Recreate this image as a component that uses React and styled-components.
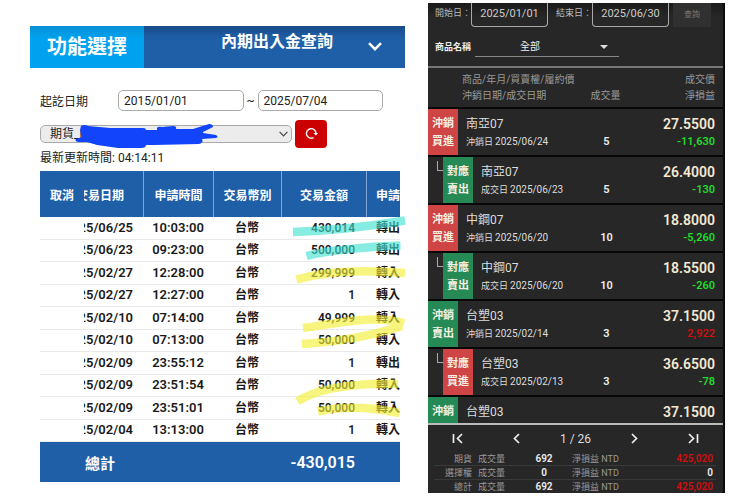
import React from "react";
import styled, { createGlobalStyle } from "styled-components";

const GlobalStyle = createGlobalStyle`
  * { box-sizing: border-box; }
  body {
    margin: 0;
    background: #fff;
    font-family: Roboto, "Noto Sans CJK TC", sans-serif;
  }
  button, input, select { font-family: inherit; margin: 0; }
  h1, h2, p { margin: 0; }
`;

const BLUE = "#1f5fa8";

const Page = styled.main`
  display: grid;
  grid-template-columns: 375fr 297fr;
  column-gap: 23px;
  align-items: start;
  padding: 0 15px 0 30px;
`;

/* ---------- Cash transfer panel ---------- */

const TransferPanel = styled.section`
  margin-top: 26px;
  color: #222;
  min-width: 0;
`;

const TopBar = styled.header`
  display: flex;
  height: 42px;
  color: #fff;
  background: linear-gradient(#1a4a88, ${BLUE} 12px);
`;

const MenuButton = styled.button`
  width: 114px;
  border: 0;
  padding: 0 0 4px;
  color: #fff;
  font-size: 20px;
  font-weight: 700;
  background: linear-gradient(#0a8fd4, #00a2ef 12px);
`;

const BarTitle = styled.h1`
  flex: 1;
  padding-left: 66px;
  text-align: center;
  font-size: 16px;
  line-height: 31px;
  font-weight: 700;
  white-space: nowrap;
`;

const BarToggle = styled.button`
  width: 61px;
  border: 0;
  padding: 0 0 2px;
  background: none;
  color: #fff;
  svg { display: block; margin: 0 auto; }
`;

const PanelBody = styled.div`
  padding: 22px 5px 0 10px;
`;

const DateRow = styled.div`
  display: flex;
  align-items: center;
  font-size: 12px;
`;

const DateLabel = styled.label`
  flex: none;
  width: 78px;
`;

const DateInput = styled.input`
  flex: 1;
  width: 0;
  min-width: 0;
  height: 21px;
  padding: 0 5px;
  border: 1px solid #aaa;
  border-radius: 5px;
  background: #fff;
  color: #222;
  font-size: 12px;
`;

const Tilde = styled.span`
  width: 14px;
  text-align: center;
`;

const RangeFields = styled.div`
  flex: 1;
  min-width: 0;
  display: flex;
  align-items: center;
  margin-right: 17px;
`;

const AccountRow = styled.div`
  display: flex;
  align-items: center;
  gap: 3px;
  margin-top: 9px;
  margin-right: 73px;
`;

const AccountField = styled.div`
  position: relative;
  flex: 1;
  height: 18px;
`;

const AccountSelect = styled.select`
  appearance: none;
  display: block;
  width: 100%;
  height: 18px;
  padding: 0 9px;
  border: 1px solid #aaa;
  border-radius: 5px;
  background: #ececec;
  color: #222;
  font-size: 12px;
`;

const SelectArrow = styled.svg`
  position: absolute;
  right: 4px;
  top: 6px;
  pointer-events: none;
`;

const Scribble = styled.svg`
  position: absolute;
  left: 35px;
  top: -3px;
  pointer-events: none;
`;

const RefreshButton = styled.button`
  display: flex;
  align-items: center;
  justify-content: center;
  width: 32px;
  height: 28px;
  padding: 0 0 2px;
  border: 0;
  border-radius: 4px;
  background: #cb0000;
  color: #fff;
`;

const Updated = styled.p`
  height: 23px;
  font-size: 12px;
  line-height: 20px;
`;

const TableWrap = styled.div`
  position: relative;
`;

const TransferTable = styled.table`
  width: 100%;
  height: 311px;
  table-layout: fixed;
  border-collapse: separate;
  border-spacing: 0;
  font-size: 12px;
  font-weight: 700;
`;

const HeadRow = styled.tr`
  height: 46px;
  background: ${BLUE};
  color: #fff;
`;

const Th = styled.th`
  padding: 0;
  overflow: hidden;
  white-space: nowrap;
  font-weight: 700;
  text-align: ${(p) => p.$align || "center"};
  border-left: ${(p) => (p.$rule ? "1px solid #7fa6d3" : "0")};
  padding-left: ${(p) => p.$left || 0}px;
`;

const Td = styled.td`
  padding: 0;
  overflow: hidden;
  white-space: nowrap;
  line-height: 16px;
  text-align: ${(p) => p.$align || "center"};
  padding-right: ${(p) => p.$right || 0}px;
  padding-left: ${(p) => p.$left || 0}px;
  font-weight: ${(p) => (p.$cjk ? 700 : 600)};
  font-size: ${(p) => (p.$wide ? 13 : 12)}px;
  border-bottom: 1px solid #eaeaea;
  color: #1a1a1a;
`;

const Clip = styled.div`
  display: flex;
  justify-content: flex-end;
  overflow: hidden;
  padding-right: ${(p) => p.$right}px;
`;

const TotalRow = styled.tr`
  height: 40px;
  background: ${BLUE};
  color: #fff;
  font-size: 16px;
`;

const TotalCell = styled.td`
  padding: 0 ${(p) => p.$right || 0}px 0 ${(p) => p.$left || 0}px;
  text-align: ${(p) => p.$align || "left"};
  font-size: ${(p) => (p.$align ? 16 : 15)}px;
  font-weight: ${(p) => (p.$align ? 600 : 700)};
`;

const Highlights = styled.svg`
  position: absolute;
  right: -6px;
  top: 39px;
  pointer-events: none;
  opacity: 0.62;
`;

const transfers = [
  ["2025/06/25", "10:03:00", "430,014", "轉出"],
  ["2025/06/23", "09:23:00", "500,000", "轉出"],
  ["2025/02/27", "12:28:00", "299,999", "轉入"],
  ["2025/02/27", "12:27:00", "1", "轉入"],
  ["2025/02/10", "07:14:00", "49,999", "轉入"],
  ["2025/02/10", "07:13:00", "50,000", "轉入"],
  ["2025/02/09", "23:55:12", "1", "轉出"],
  ["2025/02/09", "23:51:54", "50,000", "轉入"],
  ["2025/02/09", "23:51:01", "50,000", "轉入"],
  ["2025/02/04", "13:13:00", "1", "轉入"],
];

const Col = styled.col`
  width: ${(p) => p.$w}px;
`;

function Transfers() {
  return (
    <TransferPanel>
      <TopBar>
        <MenuButton type="button">功能選擇</MenuButton>
        <BarTitle>內期出入金查詢</BarTitle>
        <BarToggle type="button" aria-label="展開">
          <svg width="14" height="9" viewBox="0 0 14 9" fill="none" stroke="currentColor" strokeWidth="2.4">
            <path d="M1 1.2 7 7.2 13 1.2" />
          </svg>
        </BarToggle>
      </TopBar>
      <PanelBody>
        <DateRow>
          <DateLabel htmlFor="from">起訖日期</DateLabel>
          <RangeFields>
            <DateInput id="from" defaultValue="2015/01/01" />
            <Tilde>~</Tilde>
            <DateInput aria-label="結束日期" defaultValue="2025/07/04" />
          </RangeFields>
        </DateRow>
        <AccountRow>
          <AccountField>
            <AccountSelect aria-label="帳號">
              <option>期貨_F</option>
            </AccountSelect>
            <SelectArrow width="9" height="6" viewBox="0 0 9 6" fill="none" stroke="#444" strokeWidth="1.2">
              <path d="M.6.8 4.5 4.8 8.4.8" />
            </SelectArrow>
            <Scribble width="144" height="27" viewBox="75 122 144 27" fill="#1245fb">
              <path d="M81 126Q84 124 88 126L110 128 143 128Q146 128 146 130L157 130 157 128Q158 126 162 127L173 126Q177 126 176 129L193 129 209 124Q213 124 213 127L203 132 203 133 216 135Q219 137 216 138L202 139Q204 143 199 144L154 145 146 145Q146 148 141 148H118L97 145 87 142 78 142Q74 141 76 139L82 137Q79 131 81 126Z" />
            </Scribble>
          </AccountField>
          <RefreshButton type="button" aria-label="重新整理">
            <svg width="13" height="13" viewBox="0 0 13 13" fill="none" stroke="currentColor" strokeWidth="1.4">
              <path d="M8.6 10.6A4.8 4.8 0 1 1 11 6.4" />
              <path d="M8.6 6h4.4L10.9 8.6Z" fill="currentColor" stroke="none" />
            </svg>
          </RefreshButton>
        </AccountRow>
        <Updated>最新更新時間: 04:14:11</Updated>
        <TableWrap>
          <TransferTable>
            <colgroup>
              <Col $w={44} />
              <Col $w={59} />
              <Col $w={70} />
              <Col $w={68} />
              <Col $w={85} />
              <Col $w={34} />
            </colgroup>
            <thead>
              <HeadRow>
                <Th>取消</Th>
                <Th>
                  <Clip $right={19}>
                    <span>交易日期</span>
                  </Clip>
                </Th>
                <Th $rule>申請時間</Th>
                <Th $rule>交易幣別</Th>
                <Th $rule>交易金額</Th>
                <Th $rule $align="left" $left={9}>申請</Th>
              </HeadRow>
            </thead>
            <tbody>
              {transfers.map(([date, time, amount, kind]) => (
                <tr key={date + time}>
                  <Td />
                  <Td $wide>
                    <Clip $right={10}>
                      <span>{date}</span>
                    </Clip>
                  </Td>
                  <Td $wide>{time}</Td>
                  <Td $cjk>台幣</Td>
                  <Td $align="right" $right={11}>{amount}</Td>
                  <Td $cjk $align="left" $left={10}>{kind}</Td>
                </tr>
              ))}
            </tbody>
            <tfoot>
              <TotalRow>
                <TotalCell colSpan={3} $left={45}>總計</TotalCell>
                <TotalCell colSpan={2} $align="right" $right={11}>-430,015</TotalCell>
                <TotalCell />
              </TotalRow>
            </tfoot>
          </TransferTable>
          <Highlights width="116" height="210" viewBox="290 210 116 210" fill="none" strokeWidth="8.5">
            <g stroke="#3fe3d3">
              <path d="M293 232C325 231 365 227 405 220.500" />
              <path d="M306.500 256C330 250 362 247 400.500 245.500" />
            </g>
            <g stroke="#f3f030">
              <path d="M296.500 279.500C330 270 370 270 405 273" />
              <path d="M303 328C335 324 375 314 404 323.500" />
              <path d="M302 344C335 342 365 338 402 326" />
              <path d="M297.500 401.500C320 387 355 383 398 384" />
              <path d="M318 411.500C345 405 375 408 399.500 413" />
            </g>
          </Highlights>
        </TableWrap>
      </PanelBody>
    </TransferPanel>
  );
}

/* ---------- Closed position panel ---------- */

const TradePanel = styled.section`
  margin-top: 3px;
  min-width: 0;
  background: #272727;
  color: #eee;
  border-right: 2px solid #0c0c0c;
`;

const FilterRow = styled.div`
  display: flex;
  height: 24px;
  padding: 0 12px 0 7px;
  background: linear-gradient(#1a1a1a, #272727 14px);
`;

const FilterLabel = styled.label`
  flex: none;
  width: 36px;
  margin-left: ${(p) => p.$gap || 0}px;
  font-size: 9px;
  line-height: 21px;
  white-space: nowrap;
  color: #bbb;
`;

const FilterInput = styled.input`
  flex: 1;
  width: 0;
  min-width: 0;
  height: 24px;
  padding: 0 0 3px;
  text-align: center;
  border: 1px solid #aaa;
  border-top: 0;
  border-radius: 0 0 4px 4px;
  background: transparent;
  color: #ccc;
  font-size: 11px;
`;

const QueryButton = styled.button`
  width: 38px;
  height: 24px;
  margin-left: 4px;
  padding: 0 0 3px;
  border: 0;
  background: #303030;
  color: #777;
  font-size: 8px;
`;

const ProductRow = styled.div`
  display: flex;
  margin-top: 10px;
  padding: 0 104px 9px 7px;
  border-bottom: 2px solid #777;
`;

const ProductLabel = styled.label`
  width: 40px;
  font-size: 9px;
  font-weight: 700;
  line-height: 20px;
`;

const ProductField = styled.div`
  position: relative;
  flex: 1;
`;

const ProductSelect = styled.select`
  appearance: none;
  display: block;
  width: 100%;
  height: 20px;
  padding: 0 0 0 45px;
  border: 0;
  border-bottom: 1px solid #888;
  background: transparent;
  color: #eee;
  font-size: 10px;
`;

const Triangle = styled.svg`
  position: absolute;
  right: 11px;
  top: 8px;
  pointer-events: none;
`;

const TradeScroll = styled.div`
  height: 357px;
  overflow: hidden;
  border-bottom: 2px solid #bbb;
`;

const TradeTable = styled.table`
  width: 100%;
  table-layout: fixed;
  border-collapse: separate;
  border-spacing: 0;
`;

const TradeTh = styled.th`
  height: 41px;
  padding: 4px ${(p) => p.$right || 0}px 3px ${(p) => p.$left || 0}px;
  vertical-align: bottom;
  border-bottom: 2px solid #080808;
  color: #999;
  font-size: 10px;
  line-height: 16px;
  font-weight: 400;
  white-space: nowrap;
  text-align: ${(p) => p.$align || "left"};
`;

const TradeTd = styled.td`
  height: 48px;
  padding: ${(p) => (p.$text ? "5px" : 0)} ${(p) => p.$right || 0}px 0 0;
  vertical-align: top;
  border-bottom: 2px solid #080808;
  text-align: ${(p) => p.$align || "left"};
`;

const Contract = styled.div`
  display: flex;
  height: 46px;
`;

const Branch = styled.span`
  width: 6px;
  height: 10px;
  margin: 4px 0 0 9px;
  border-left: 1px solid #aaa;
  border-bottom: 1px solid #aaa;
`;

const Tag = styled.span`
  width: 30px;
  padding-top: 6px;
  background: ${(p) => (p.$buy ? "#cf4444" : "#258a56")};
  color: #f6f0e2;
  font-size: 11px;
  line-height: 18px;
  font-weight: 700;
  text-align: center;
`;

const Info = styled.div`
  padding: 5px 0 0 8px;
  white-space: nowrap;
`;

const Name = styled.div`
  font-size: 12px;
  line-height: 20px;
  color: #ddd;
`;

const When = styled.div`
  display: flex;
  gap: 2px;
  font-size: 9px;
  line-height: 16px;
  color: #ddd;
`;

const WhenDate = styled.time`
  font-size: 10px;
`;

const Qty = styled.div`
  margin-top: 20px;
  font-size: 11px;
  line-height: 16px;
  font-weight: 600;
`;

const Price = styled.div`
  font-size: 14px;
  line-height: 20px;
  font-weight: 600;
  color: #f5e9d2;
`;

const Profit = styled.div`
  font-size: 11px;
  line-height: 16px;
  font-weight: 600;
  color: ${(p) => (p.$loss ? "#1fdc2c" : "#cf1010")};
`;

const Pager = styled.nav`
  display: grid;
  grid-template-columns: 1fr 1fr 1fr 1fr 1fr;
  align-items: center;
  justify-items: center;
  height: 27px;
`;

const PagerButton = styled.button`
  display: flex;
  padding: 2px 8px;
  border: 0;
  background: none;
  color: #eee;
`;

const PageNumber = styled.span`
  font-size: 12px;
  color: #ddd;
`;

const SummaryWrap = styled.div`
  padding: 0 7px 0 6px;
`;

const SummaryTable = styled.table`
  width: 100%;
  height: 41px;
  table-layout: fixed;
  border-collapse: separate;
  border-spacing: 0;
`;

const SumCell = styled.td`
  padding: 0 ${(p) => p.$right || 0}px 0 ${(p) => p.$left || 0}px;
  text-align: ${(p) => p.$align || "left"};
  border-bottom: ${(p) => (p.$last ? "0" : "1px solid #3a3a3a")};
  font-size: ${(p) => (p.$value ? 10 : 9)}px;
  font-weight: ${(p) => (p.$value ? 600 : 400)};
  line-height: 12px;
  color: ${(p) => (p.$gain ? "#cf1010" : p.$value ? "#eee" : "#999")};
  white-space: nowrap;
`;

const trades = [
  { tag: ["沖銷", "買進"], buy: true, name: "南亞07", kind: "沖銷日", date: "2025/06/24", qty: 5, price: "27.5500", pnl: "-11,630" },
  { child: true, tag: ["對應", "賣出"], name: "南亞07", kind: "成交日", date: "2025/06/23", qty: 5, price: "26.4000", pnl: "-130" },
  { tag: ["沖銷", "買進"], buy: true, name: "中鋼07", kind: "沖銷日", date: "2025/06/20", qty: 10, price: "18.8000", pnl: "-5,260" },
  { child: true, tag: ["對應", "賣出"], name: "中鋼07", kind: "成交日", date: "2025/06/20", qty: 10, price: "18.5500", pnl: "-260" },
  { tag: ["沖銷", "賣出"], name: "台塑03", kind: "沖銷日", date: "2025/02/14", qty: 3, price: "37.1500", pnl: "2,922" },
  { child: true, tag: ["對應", "買進"], buy: true, name: "台塑03", kind: "成交日", date: "2025/02/13", qty: 3, price: "36.6500", pnl: "-78" },
  { tag: ["沖銷"], name: "台塑03", price: "37.1500" },
];

const summary = [
  ["期貨", "692", "425,020"],
  ["選擇權", "0", "0"],
  ["總計", "692", "425,020"],
];

const pagerIcons = {
  first: "M1.500 1V10M10 1 5.500 5.500 10 10",
  prev: "M8 1 3.500 5.500 8 10",
  next: "M3 1 7.500 5.500 3 10",
  last: "M1 1 5.500 5.500 1 10M9.500 1V10",
};

function PageIcon({ name, label }) {
  return (
    <PagerButton type="button" aria-label={label}>
      <svg width="11" height="11" viewBox="0 0 11 11" fill="none" stroke="currentColor" strokeWidth="1.700">
        <path d={pagerIcons[name]} />
      </svg>
    </PagerButton>
  );
}

function Trades() {
  return (
    <TradePanel>
      <FilterRow>
        <FilterLabel htmlFor="start">開始日：</FilterLabel>
        <FilterInput id="start" defaultValue="2025/01/01" />
        <FilterLabel $gap={8} htmlFor="end">結束日：</FilterLabel>
        <FilterInput id="end" defaultValue="2025/06/30" />
        <QueryButton type="button">查詢</QueryButton>
      </FilterRow>
      <ProductRow>
        <ProductLabel htmlFor="product">商品名稱</ProductLabel>
        <ProductField>
          <ProductSelect id="product">
            <option>全部</option>
          </ProductSelect>
          <Triangle width="8" height="4" viewBox="0 0 8 4" fill="#ddd">
            <path d="M0 0h8L4 4Z" />
          </Triangle>
        </ProductField>
      </ProductRow>
      <TradeScroll>
        <TradeTable>
          <colgroup>
            <Col $w={151} />
            <Col $w={55} />
            <Col $w={89} />
          </colgroup>
          <thead>
            <tr>
              <TradeTh $left={34}>
                商品/年月/買賣權/履約價
                <br />
                沖銷日期/成交日期
              </TradeTh>
              <TradeTh $align="center" $right={2}>成交量</TradeTh>
              <TradeTh $align="right" $right={8}>
                成交價
                <br />
                淨損益
              </TradeTh>
            </tr>
          </thead>
          <tbody>
            {trades.map((t, i) => (
              <tr key={i}>
                <TradeTd>
                  <Contract>
                    {t.child && <Branch />}
                    <Tag $buy={t.buy}>
                      {t.tag[0]}
                      <br />
                      {t.tag[1]}
                    </Tag>
                    <Info>
                      <Name>{t.name}</Name>
                      {t.date && (
                        <When>
                          {t.kind}
                          <WhenDate>{t.date}</WhenDate>
                        </When>
                      )}
                    </Info>
                  </Contract>
                </TradeTd>
                <TradeTd $text $align="center">
                  <Qty>{t.qty}</Qty>
                </TradeTd>
                <TradeTd $text $align="right" $right={8}>
                  <Price>{t.price}</Price>
                  {t.pnl && <Profit $loss={t.pnl.startsWith("-")}>{t.pnl}</Profit>}
                </TradeTd>
              </tr>
            ))}
          </tbody>
        </TradeTable>
      </TradeScroll>
      <Pager>
        <PageIcon name="first" label="第一頁" />
        <PageIcon name="prev" label="上一頁" />
        <PageNumber>1 / 26</PageNumber>
        <PageIcon name="next" label="下一頁" />
        <PageIcon name="last" label="最後一頁" />
      </Pager>
      <SummaryWrap>
        <SummaryTable>
          <colgroup>
            <Col $w={38} />
            <Col $w={46} />
            <Col $w={52} />
            <Col $w={86} />
            <Col $w={60} />
          </colgroup>
          <tbody>
            {summary.map(([label, volume, profit], i) => {
              const last = i === summary.length - 1;
              return (
                <tr key={label}>
                  <SumCell $last={last} $align="right">{label}</SumCell>
                  <SumCell $last={last} $left={6}>成交量</SumCell>
                  <SumCell $last={last} $value $align="center">{volume}</SumCell>
                  <SumCell $last={last} $left={2}>淨損益 NTD</SumCell>
                  <SumCell $last={last} $value $gain={profit !== "0"} $align="right" $right={3}>
                    {profit}
                  </SumCell>
                </tr>
              );
            })}
          </tbody>
        </SummaryTable>
      </SummaryWrap>
    </TradePanel>
  );
}

export default function App() {
  return (
    <>
      <GlobalStyle />
      <Page>
        <Transfers />
        <Trades />
      </Page>
    </>
  );
}
